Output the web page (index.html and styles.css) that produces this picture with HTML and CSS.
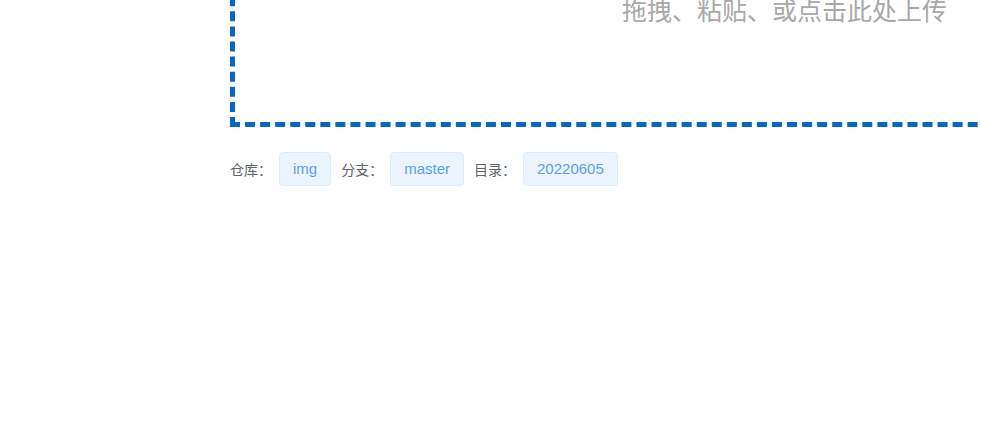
FILE: index.html
```html
<!DOCTYPE html>
<html lang="zh-CN">
<head>
<meta charset="utf-8">
<title>上传</title>
<link rel="stylesheet" href="styles.css">
</head>
<body>
<div class="page">
  <div class="upload">
    <div class="upload-text">拖拽、粘贴、或点击此处上传</div>
  </div>
  <div class="info">
    <span class="label">仓库：</span><span class="tag">img</span>
    <span class="label">分支：</span><span class="tag">master</span>
    <span class="label">目录：</span><span class="tag">20220605</span>
  </div>
</div>
</body>
</html>
```

FILE: styles.css
```css
html, body {
  margin: 0;
  padding: 0;
  overflow: hidden;
  background: #ffffff;
}
body {
  font-family: "Liberation Sans", "Noto Sans CJK SC", sans-serif;
}
.page {
  padding-left: 230px;
}
.upload {
  box-sizing: border-box;
  width: 1109px;
  height: 161px;
  margin-top: -34px;
  border: 5px dashed #0a66c2;
  padding-top: 26px;
  text-align: center;
}
.upload-text {
  font-family: "Noto Sans CJK SC", sans-serif;
  font-size: 25px;
  line-height: 25px;
  color: #a8a8a8;
}
.info {
  display: flex;
  align-items: center;
  margin-top: 25px;
}
.label {
  font-family: "Noto Sans CJK SC", sans-serif;
  font-size: 14px;
  color: #606266;
  margin-right: 7px;
}
.tag {
  box-sizing: border-box;
  height: 34px;
  line-height: 32px;
  padding: 0 13px;
  font-size: 15px;
  color: #5a9ef0;
  background: #ecf5ff;
  border: 1px solid #d9ecff;
  border-radius: 4px;
  margin-right: 10px;
}
```
